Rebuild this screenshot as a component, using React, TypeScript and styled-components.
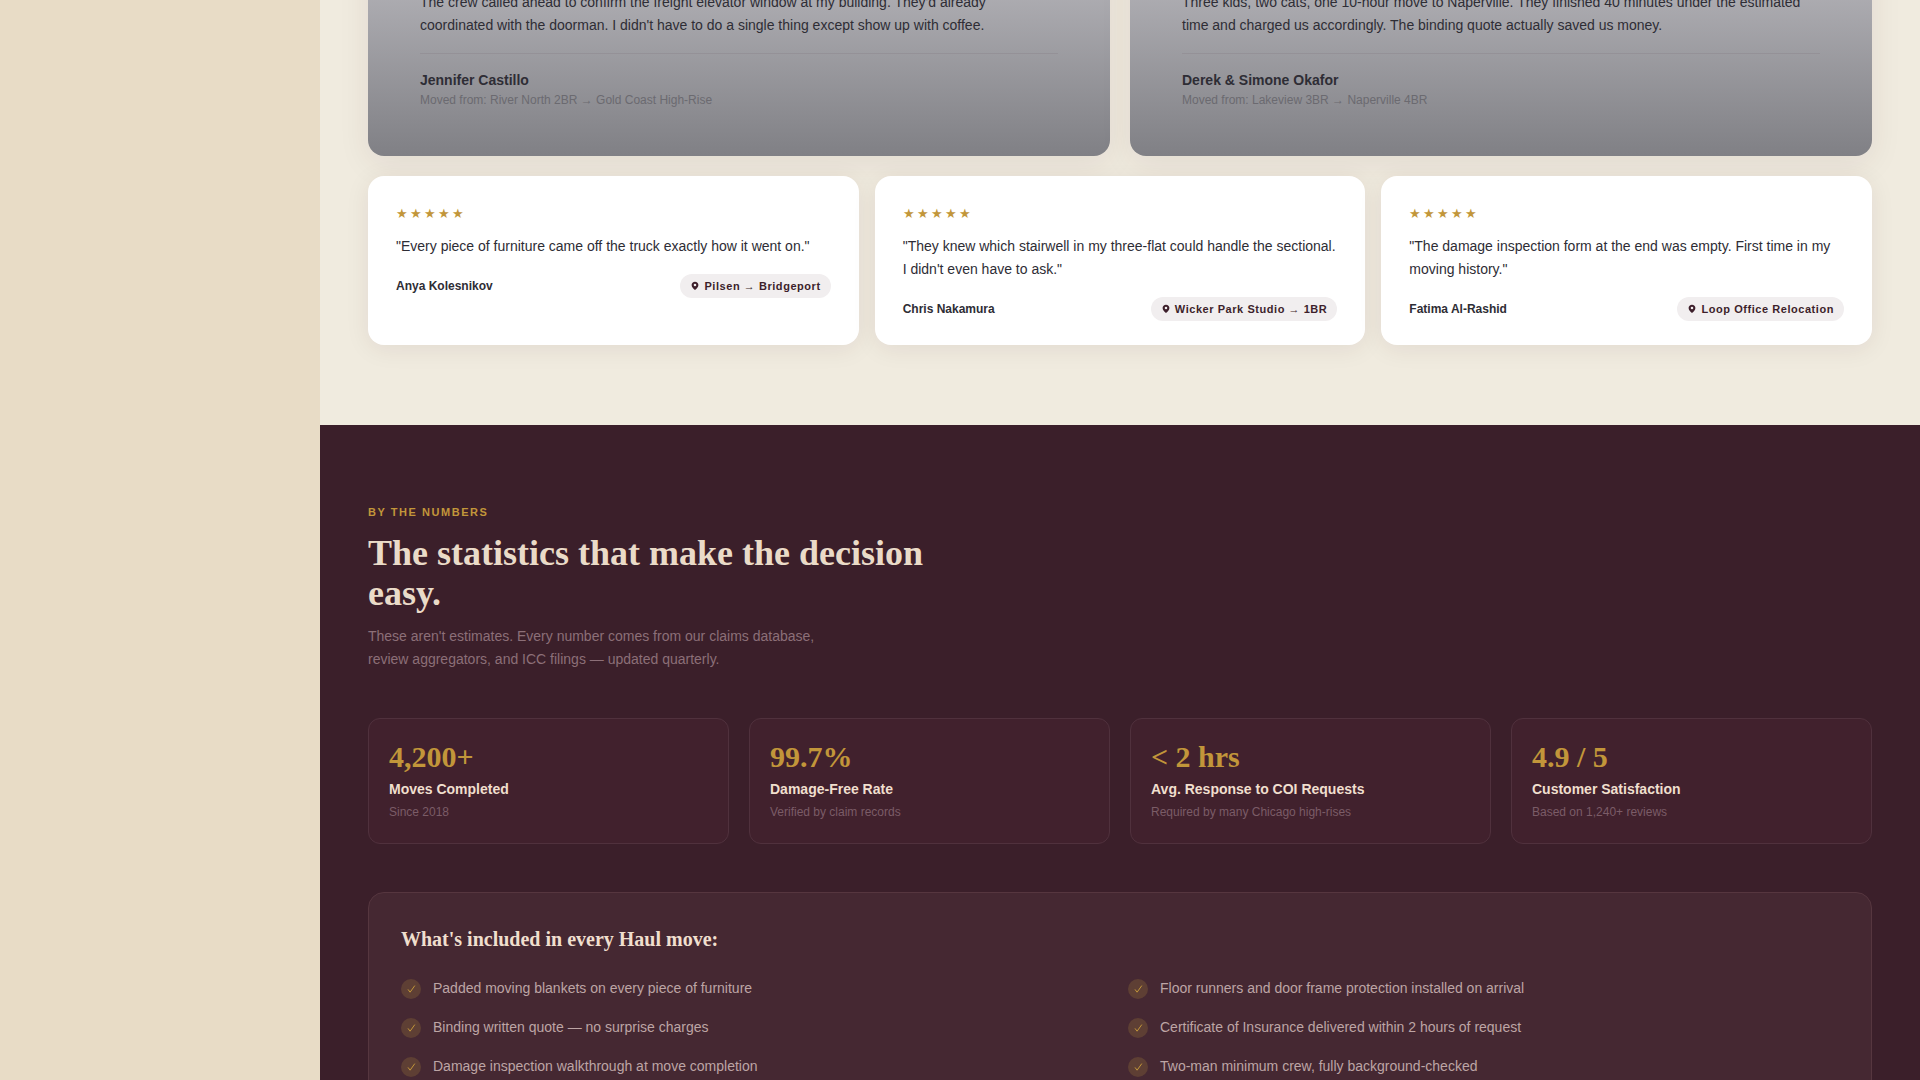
import React from "react";
import styled, { createGlobalStyle } from "styled-components";

const sans = `"Liberation Sans", Arial, sans-serif`;
const serif = `"Liberation Serif", "Times New Roman", serif`;

const GlobalStyle = createGlobalStyle`
  *, *::before, *::after { box-sizing: border-box; }
  body {
    margin: 0;
    background: #e8dcc6;
    color: #2e2d35;
    font-family: ${sans};
    font-size: 14px;
    line-height: 23px;
  }
  h2, h3, p, ul, figure, blockquote { margin: 0; padding: 0; }
`;

const Shell = styled.div`
  display: grid;
  grid-template-columns: 320px minmax(0, 1fr);
  height: 100vh;
  overflow: hidden;
`;

const Sidebar = styled.aside`
  background: #e8dcc6;
`;

const Main = styled.main`
  min-width: 0;
  overflow: hidden;
  background: #f0ebdf;
`;

const Reviews = styled.section`
  display: flex;
  flex-direction: column;
  gap: 20px;
  margin-top: -64px;
  padding: 0 48px 80px;
`;

const FeaturedGrid = styled.div`
  display: grid;
  grid-template-columns: repeat(2, minmax(0, 1fr));
  gap: 20px;
`;

const FeaturedCard = styled.figure`
  padding: 55px 52px 46px;
  border-radius: 16px;
  background: linear-gradient(180deg, #bdbcc1 0%, #808085 100%);
  box-shadow: 0 8px 32px rgba(61, 31, 43, 0.08);
`;

const FeaturedQuote = styled.blockquote`
  padding-bottom: 16px;
  border-bottom: 1px solid rgba(61, 31, 43, 0.08);
`;

const FeaturedCaption = styled.figcaption`
  display: flex;
  flex-direction: column;
  padding-top: 16px;
`;

const FeaturedName = styled.strong`
  line-height: 21px;
`;

const FeaturedRoute = styled.span`
  color: #6b6a70;
  font-size: 12px;
  line-height: 19px;
`;

const ReviewGrid = styled.div`
  display: grid;
  grid-template-columns: repeat(3, minmax(0, 1fr));
  gap: 16px;
`;

const ReviewCard = styled.figure`
  padding: 24px 28px;
  border-radius: 16px;
  background: #ffffff;
  box-shadow: 0 4px 24px rgba(61, 31, 43, 0.08);
`;

const Stars = styled.div`
  margin-bottom: 8px;
  color: #c2963a;
  font-size: 13px;
  line-height: 27px;
  letter-spacing: 2px;
`;

const ReviewFooter = styled.figcaption`
  display: flex;
  align-items: center;
  justify-content: space-between;
  margin-top: 16px;
`;

const ReviewName = styled.strong`
  font-size: 12px;
`;

const RoutePill = styled.span`
  display: inline-flex;
  align-items: center;
  gap: 4px;
  padding: 3px 10px;
  border-radius: 12px;
  background: #f1eeef;
  color: #3d1f2b;
  font-size: 11px;
  font-weight: 700;
  line-height: 18px;
  letter-spacing: 0.05em;
`;

const Numbers = styled.section`
  min-height: 100vh;
  padding: 80px 48px;
  background: #3b1f2a;
  color: #f0dfce;
`;

const Eyebrow = styled.p`
  margin-bottom: 14px;
  color: #c2963a;
  font-size: 11px;
  font-weight: 700;
  line-height: 14px;
  letter-spacing: 0.14em;
  text-transform: uppercase;
`;

const Title = styled.h2`
  max-width: 600px;
  margin-bottom: 12px;
  color: #eadbc8;
  font-family: ${serif};
  font-size: 36px;
  font-weight: 700;
  line-height: 40px;
`;

const Lead = styled.p`
  max-width: 480px;
  margin-bottom: 47px;
  color: #8c6f78;
`;

const StatGrid = styled.div`
  display: grid;
  grid-template-columns: repeat(4, minmax(0, 1fr));
  gap: 20px;
  margin-bottom: 48px;
`;

const StatCard = styled.div`
  display: flex;
  flex-direction: column;
  padding: 20px;
  border: 1px solid #50313d;
  border-radius: 12px;
  background: #41212d;
`;

const StatValue = styled.span`
  margin-bottom: 3px;
  color: #c2963a;
  font-family: ${serif};
  font-size: 30px;
  font-weight: 700;
  line-height: 36px;
`;

const StatLabel = styled.span`
  font-weight: 700;
`;

const StatNote = styled.span`
  color: #7b5c67;
  font-size: 12px;
  line-height: 22px;
`;

const Included = styled.div`
  padding: 32px;
  border: 1px solid #56363f;
  border-radius: 16px;
  background: #452832;
`;

const IncludedTitle = styled.h3`
  margin-bottom: 24px;
  font-family: ${serif};
  font-size: 20px;
  font-weight: 700;
  line-height: 28px;
`;

const IncludedList = styled.ul`
  display: grid;
  grid-template-columns: repeat(2, minmax(0, 1fr));
  gap: 16px;
  list-style: none;
`;

const IncludedItem = styled.li`
  display: flex;
  align-items: flex-start;
  gap: 12px;
  color: #bda5a5;
`;

const CheckBadge = styled.span`
  display: grid;
  flex: none;
  place-items: center;
  width: 20px;
  height: 20px;
  margin-top: 2px;
  border-radius: 50%;
  background: #5e3f34;
`;

const PinIcon = () => (
  <svg width="10" height="10" viewBox="0 0 10 10" aria-hidden="true">
    <path
      fill="currentColor"
      fillRule="evenodd"
      d="M5 .8C3.1.8 1.6 2.2 1.6 4.1c0 2.2 1.8 3.6 3.4 5 1.6-1.4 3.4-2.8 3.4-5C8.4 2.2 6.9.8 5 .8Zm0 1.9a1.3 1.3 0 1 1 0 2.6 1.3 1.3 0 0 1 0-2.6Z"
    />
  </svg>
);

const CheckIcon = () => (
  <svg width="10" height="10" viewBox="0 0 10 10" aria-hidden="true">
    <path d="M2 5.4 4.1 8.2 8.8 1.6" fill="none" stroke="#c2963a" strokeWidth="1" />
  </svg>
);

const featured = [
  {
    quote:
      "The crew called ahead to confirm the freight elevator window at my building. They'd already coordinated with the doorman. I didn't have to do a single thing except show up with coffee.",
    name: "Jennifer Castillo",
    route: "Moved from: River North 2BR → Gold Coast High-Rise",
  },
  {
    quote:
      "Three kids, two cats, one 10-hour move to Naperville. They finished 40 minutes under the estimated time and charged us accordingly. The binding quote actually saved us money.",
    name: "Derek & Simone Okafor",
    route: "Moved from: Lakeview 3BR → Naperville 4BR",
  },
];

const reviews = [
  {
    quote: "\"Every piece of furniture came off the truck exactly how it went on.\"",
    name: "Anya Kolesnikov",
    route: "Pilsen → Bridgeport",
  },
  {
    quote:
      "\"They knew which stairwell in my three-flat could handle the sectional. I didn't even have to ask.\"",
    name: "Chris Nakamura",
    route: "Wicker Park Studio → 1BR",
  },
  {
    quote: "\"The damage inspection form at the end was empty. First time in my moving history.\"",
    name: "Fatima Al-Rashid",
    route: "Loop Office Relocation",
  },
];

const stats = [
  { value: "4,200+", label: "Moves Completed", note: "Since 2018" },
  { value: "99.7%", label: "Damage-Free Rate", note: "Verified by claim records" },
  { value: "< 2 hrs", label: "Avg. Response to COI Requests", note: "Required by many Chicago high-rises" },
  { value: "4.9 / 5", label: "Customer Satisfaction", note: "Based on 1,240+ reviews" },
];

const included = [
  "Padded moving blankets on every piece of furniture",
  "Floor runners and door frame protection installed on arrival",
  "Binding written quote — no surprise charges",
  "Certificate of Insurance delivered within 2 hours of request",
  "Damage inspection walkthrough at move completion",
  "Two-man minimum crew, fully background-checked",
];

export default function App() {
  return (
    <>
      <GlobalStyle />
      <Shell>
        <Sidebar />
        <Main>
          <Reviews>
            <FeaturedGrid>
              {featured.map((item) => (
                <FeaturedCard key={item.name}>
                  <FeaturedQuote>{item.quote}</FeaturedQuote>
                  <FeaturedCaption>
                    <FeaturedName>{item.name}</FeaturedName>
                    <FeaturedRoute>{item.route}</FeaturedRoute>
                  </FeaturedCaption>
                </FeaturedCard>
              ))}
            </FeaturedGrid>
            <ReviewGrid>
              {reviews.map((item) => (
                <ReviewCard key={item.name}>
                  <Stars>★★★★★</Stars>
                  <blockquote>{item.quote}</blockquote>
                  <ReviewFooter>
                    <ReviewName>{item.name}</ReviewName>
                    <RoutePill>
                      <PinIcon />
                      {item.route}
                    </RoutePill>
                  </ReviewFooter>
                </ReviewCard>
              ))}
            </ReviewGrid>
          </Reviews>
          <Numbers>
            <Eyebrow>By the numbers</Eyebrow>
            <Title>The statistics that make the decision easy.</Title>
            <Lead>
              These aren't estimates. Every number comes from our claims database, review
              aggregators, and ICC filings — updated quarterly.
            </Lead>
            <StatGrid>
              {stats.map((stat) => (
                <StatCard key={stat.label}>
                  <StatValue>{stat.value}</StatValue>
                  <StatLabel>{stat.label}</StatLabel>
                  <StatNote>{stat.note}</StatNote>
                </StatCard>
              ))}
            </StatGrid>
            <Included>
              <IncludedTitle>What's included in every Haul move:</IncludedTitle>
              <IncludedList>
                {included.map((text) => (
                  <IncludedItem key={text}>
                    <CheckBadge>
                      <CheckIcon />
                    </CheckBadge>
                    {text}
                  </IncludedItem>
                ))}
              </IncludedList>
            </Included>
          </Numbers>
        </Main>
      </Shell>
    </>
  );
}
